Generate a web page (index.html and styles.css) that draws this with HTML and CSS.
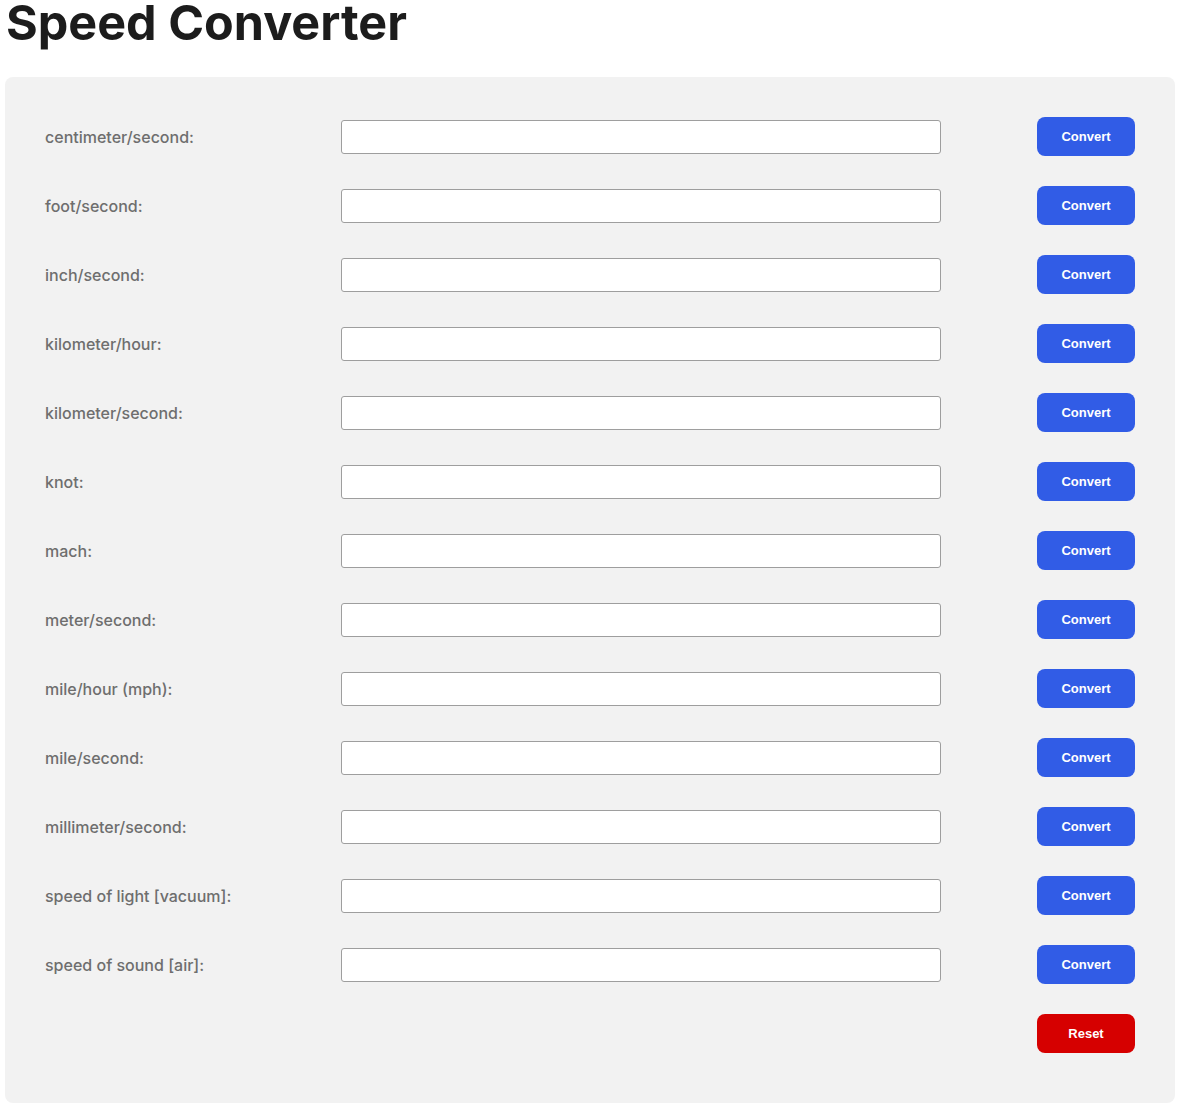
FILE: index.html
```html
<!DOCTYPE html>
<html>
<head>
<meta charset="utf-8">
<link rel="stylesheet" href="styles.css">
</head>
<body>
<h1 class="title">Speed Converter</h1>
<div class="panel">
  <div class="row"><label class="label">centimeter/second:</label><input class="field" type="text"><button class="btn convert">Convert</button></div>
  <div class="row"><label class="label">foot/second:</label><input class="field" type="text"><button class="btn convert">Convert</button></div>
  <div class="row"><label class="label">inch/second:</label><input class="field" type="text"><button class="btn convert">Convert</button></div>
  <div class="row"><label class="label">kilometer/hour:</label><input class="field" type="text"><button class="btn convert">Convert</button></div>
  <div class="row"><label class="label">kilometer/second:</label><input class="field" type="text"><button class="btn convert">Convert</button></div>
  <div class="row"><label class="label">knot:</label><input class="field" type="text"><button class="btn convert">Convert</button></div>
  <div class="row"><label class="label">mach:</label><input class="field" type="text"><button class="btn convert">Convert</button></div>
  <div class="row"><label class="label">meter/second:</label><input class="field" type="text"><button class="btn convert">Convert</button></div>
  <div class="row"><label class="label">mile/hour (mph):</label><input class="field" type="text"><button class="btn convert">Convert</button></div>
  <div class="row"><label class="label">mile/second:</label><input class="field" type="text"><button class="btn convert">Convert</button></div>
  <div class="row"><label class="label">millimeter/second:</label><input class="field" type="text"><button class="btn convert">Convert</button></div>
  <div class="row"><label class="label">speed of light [vacuum]:</label><input class="field" type="text"><button class="btn convert">Convert</button></div>
  <div class="row"><label class="label">speed of sound [air]:</label><input class="field" type="text"><button class="btn convert">Convert</button></div>
  <div class="row reset-row"><button class="btn reset">Reset</button></div>
</div>
</body>
</html>
```

FILE: styles.css
```css
html, body {
  background: #ffffff;
}
body {
  margin: 0 4px 0 5px;
  font-family: Inter, "Noto Sans", sans-serif;
}
.title {
  margin: 0;
  padding-left: 1px;
  font-family: Inter, sans-serif;
  font-weight: 700;
  font-size: 48.5px;
  line-height: 46px;
  color: #1c1c1c;
  height: 77px;
  box-sizing: border-box;
}
.panel {
  background: #f2f2f2;
  border-radius: 8px;
  padding: 40px 40px 50px 40px;
  display: flex;
  flex-direction: column;
  gap: 30px;
}
.row {
  display: flex;
  align-items: center;
  height: 39px;
}
.label {
  width: 296px;
  flex: none;
  font-size: 16px;
  font-weight: 500;
  color: #6e6e6e;
}
.field {
  width: 600px;
  height: 34px;
  box-sizing: border-box;
  border: 1px solid #9e9e9e;
  border-radius: 3px;
  background: #fff;
  margin: 0;
  padding: 0 8px;
  flex: none;
}
.btn {
  margin-left: auto;
  width: 98px;
  height: 39px;
  border: none;
  border-radius: 8px;
  color: #fff;
  font-family: "Liberation Sans", Arial, sans-serif;
  font-weight: 700;
  font-size: 13px;
  cursor: pointer;
}
.convert {
  background: #315ce6;
}
.reset {
  background: #d60000;
}
```
